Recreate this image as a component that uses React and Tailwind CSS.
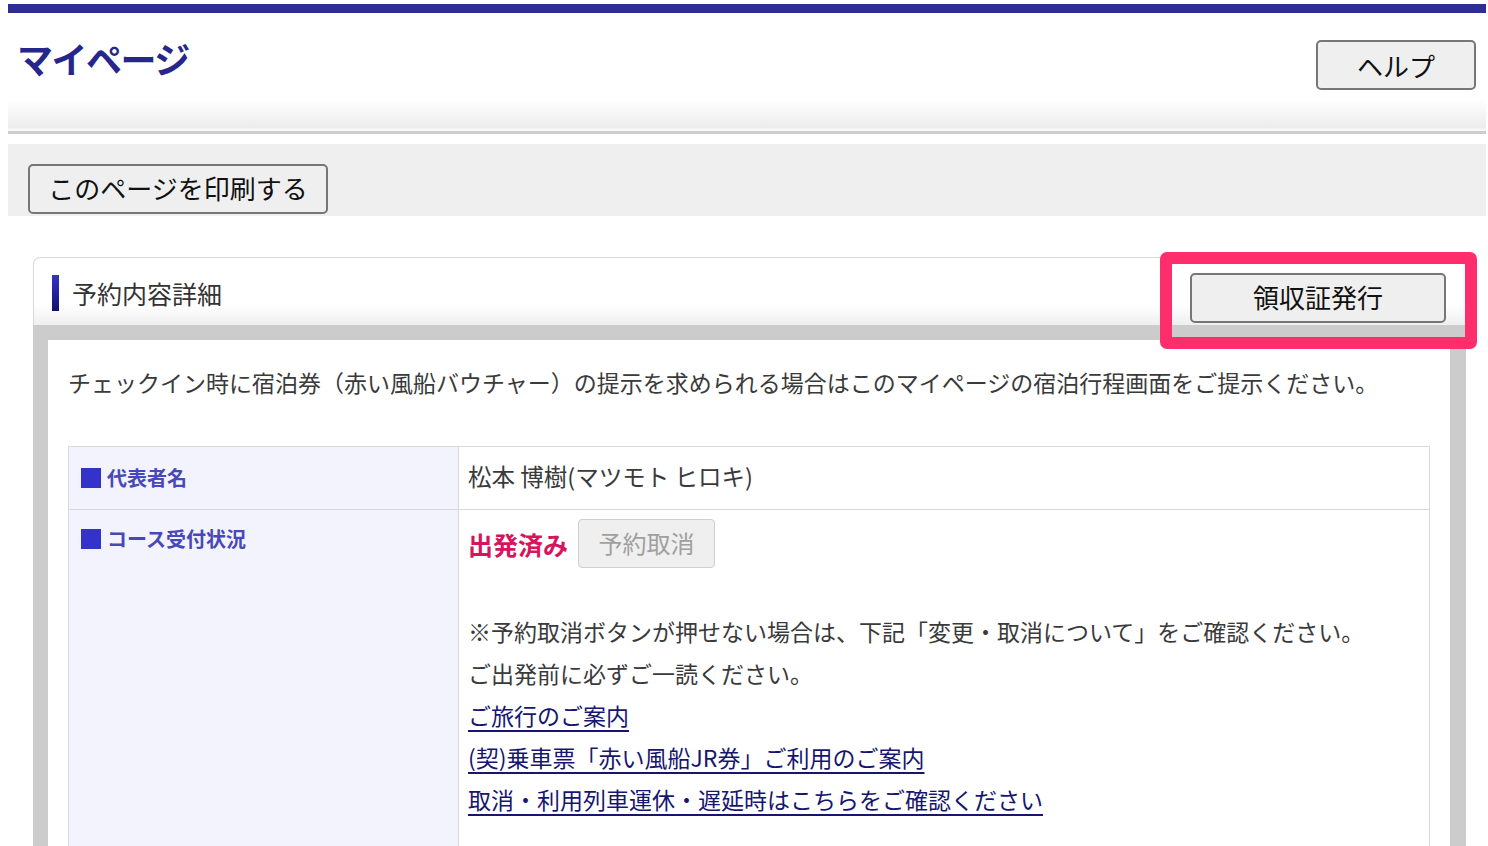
export default function App() {
  const font = { fontFamily: '"Noto Sans CJK JP", "Noto Sans", sans-serif' };
  return (
    <div style={font} className="bg-white min-h-[846px] pt-1 pl-2 pr-[2px] text-[#333] overflow-hidden">
      <div className="h-[9px] bg-[#2d2d95]" />
      <div className="h-[118px] flex items-start justify-between bg-[linear-gradient(to_bottom,#ffffff_0px,#ffffff_86px,#ececec_115px,#f8f8f8_116px,#f8f8f8_118px)]">
        <h1 className="ml-[9px] mt-[23px] text-[36px] leading-[44px] font-bold text-[#26268c] tracking-[-1.5px]">マイページ</h1>
        <button className="mr-[10px] mt-[27px] w-[160px] h-[50px] rounded-[5px] border-2 border-[#767676] bg-[#efefef] text-[26px] text-[#111] flex items-center justify-center">
          ヘルプ
        </button>
      </div>
      <div className="h-[3px] bg-[#cdcdcd]" />
      <div className="mt-[10px] h-[72px] bg-[#efefef] pt-5 pl-5">
        <button className="w-[300px] h-[50px] rounded-[5px] border-2 border-[#767676] bg-[#efefef] text-[26px] leading-[30px] text-[#111] flex items-center justify-center pb-[3px]">
          このページを印刷する
        </button>
      </div>

      <div className="mt-[41px] ml-[25px] mr-[20px]">
        <div className="h-[68px] flex items-start justify-between rounded-t-[7px] border border-b-0 border-[#d8d8d8] bg-[linear-gradient(to_bottom,#ffffff_0%,#ffffff_70%,#efefef_100%)]">
          <div className="flex items-center mt-[17px] ml-[18px]">
            <span className="w-[7px] h-[36px] bg-[linear-gradient(to_bottom,#3434c8,#111170)]" />
            <span className="ml-[13px] text-[25px] leading-[36px] text-[#333]">予約内容詳細</span>
          </div>
          <div className="relative mt-[15px] mr-[19px]">
            <button className="w-[256px] h-[50px] rounded-[5px] border-2 border-[#767676] bg-[#efefef] text-[26px] leading-[30px] text-[#111] flex items-center justify-center pb-[3px]">
              領収証発行
            </button>
            <div className="absolute -left-[30px] -right-[31px] -top-[21px] -bottom-[26px] border-[12px] border-[#fe2e6c] rounded-[7px] pointer-events-none" />
          </div>
        </div>
        <div className="bg-[#cccccc] pt-[15px] pl-[15px] pr-[16px]">
          <div className="bg-white px-5 pt-[25px] pb-[80px]">
            <p className="text-[23px] leading-[34px] text-[#3a3a3a]">
              チェックイン時に宿泊券（赤い風船バウチャー）の提示を求められる場合はこのマイページの宿泊行程画面をご提示ください。
            </p>
            <div className="mt-[47px] border border-[#d9d9d9]">
              <div className="flex border-b border-[#d9d9d9]">
                <div className="w-[390px] shrink-0 bg-[#f3f3fd] border-r border-[#d9d9d9] pl-3 py-4 flex items-start">
                  <div className="flex items-center h-[30px]">
                    <span className="w-[20px] h-[20px] bg-[#3333cc]" />
                    <span className="ml-[6px] text-[20px] leading-[30px] font-bold text-[#4848b8]">代表者名</span>
                  </div>
                </div>
                <div className="flex-1 pl-[9px] pt-[14px] pb-[18px] text-[23.5px] leading-[30px] text-[#3a3a3a]">
                  松本 博樹(マツモト ヒロキ)
                </div>
              </div>
              <div className="flex">
                <div className="w-[390px] shrink-0 bg-[#f3f3fd] border-r border-[#d9d9d9] pl-3 pt-[14px] pb-[80px]">
                  <div className="flex items-center h-[30px]">
                    <span className="w-[20px] h-[20px] bg-[#3333cc]" />
                    <span className="ml-[6px] text-[20px] leading-[30px] font-bold text-[#4848b8]">コース受付状況</span>
                  </div>
                </div>
                <div className="flex-1 pl-[9px] pt-[9px] pb-[80px] text-[23px] text-[#3a3a3a]">
                  <div className="flex items-center gap-[10px]">
                    <span className="text-[25px] leading-[34px] font-bold text-[#d6155c]">出発済み</span>
                    <span className="w-[137px] h-[49px] rounded-[4px] border border-[#cfcfcf] bg-[#efefef] text-[24px] text-[#a0a0a0] flex items-center justify-center pb-[2px]">
                      予約取消
                    </span>
                  </div>
                  <div className="mt-[42px] leading-[42px]">
                    <p>※予約取消ボタンが押せない場合は、下記「変更・取消について」をご確認ください。</p>
                    <p>ご出発前に必ずご一読ください。</p>
                    <p><a className="text-[#16166f] underline underline-offset-[5px] decoration-[2px]">ご旅行のご案内</a></p>
                    <p><a className="text-[#16166f] underline underline-offset-[5px] decoration-[2px]">(契)乗車票「赤い風船JR券」ご利用のご案内</a></p>
                    <p><a className="text-[#16166f] underline underline-offset-[5px] decoration-[2px]">取消・利用列車運休・遅延時はこちらをご確認ください</a></p>
                  </div>
                </div>
              </div>
            </div>
          </div>
        </div>
      </div>
    </div>
  );
}
